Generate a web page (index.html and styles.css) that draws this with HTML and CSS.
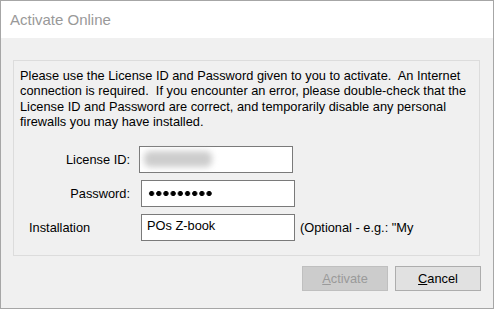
FILE: index.html
```html
<!DOCTYPE html>
<html lang="en">
<head>
    <meta charset="UTF-8">
    <title>Activate Online</title>
    <link rel="stylesheet" href="styles.css">
</head>
<body>
    <div class="dialog">
        <div class="titlebar">Activate Online</div>
        <div class="client">
            <div class="group">
                <p class="intro">Please use the License ID and Password given to you to activate.&nbsp; An Internet connection is required.&nbsp; If you encounter an error, please double-check that the License ID and Password are correct, and temporarily disable any personal firewalls you may have installed.</p>
                <div class="form">
                    <label class="lbl lbl_right">License ID:</label>
                    <div class="field field_shift"><span class="redact"></span></div>
                    <span></span>

                    <label class="lbl lbl_right">Password:</label>
                    <div class="field"><span class="dots"></span></div>
                    <span></span>

                    <label class="lbl">Installation</label>
                    <div class="field">POs Z-book</div>
                    <span class="hint">(Optional - e.g.: "My</span>
                </div>
            </div>
            <div class="buttons">
                <button class="btn" disabled><u>A</u>ctivate</button>
                <button class="btn"><u>C</u>ancel</button>
            </div>
        </div>
    </div>
</body>
</html>
```

FILE: styles.css
```css
body {
    margin: 0;
    font-family: "Liberation Sans", Arial, sans-serif;
    font-size: 12.8px;
    color: #000000;
}

.dialog {
    width: 494px;
    height: 309px;
    box-sizing: border-box;
    border: 1px solid #a6a6a6;
    background-color: #f0f0f0;
    display: flex;
    flex-direction: column;
}

.titlebar {
    height: 37px;
    box-sizing: border-box;
    padding: 10px 0 0 9px;
    background-color: #ffffff;
    color: #999999;
    font-size: 15px;
    line-height: 17px;
}

.client {
    flex: 1;
}

/* 分组框 */
.group {
    margin: 22px 13px 0 12px;
    padding: 7px 6px 14px 6px;
    border: 1px solid #dcdcdc;
}

.intro {
    margin: 0;
    line-height: 15.3px;
}

.form {
    margin: 17px 0 0 9px;
    display: grid;
    grid-template-columns: 107px 154px auto;
    grid-auto-rows: 27px;
    column-gap: 5px;
    row-gap: 7px;
    align-items: center;
}

.lbl_right {
    text-align: right;
    padding-right: 6px;
}

.field {
    position: relative;
    width: 154px;
    height: 27px;
    box-sizing: border-box;
    border: 1px solid #7a7a7a;
    background-color: #ffffff;
    padding: 3px 0 0 5px;
}

.field_shift {
    margin-left: -2px;
}

/* 打码的许可证号 */
.redact {
    position: absolute;
    left: 4px;
    top: 4px;
    width: 68px;
    height: 16px;
    border-radius: 6px;
    background-color: #cdcdcd;
    filter: blur(3px);
}

.dots {
    display: block;
    width: 65px;
    height: 7px;
    margin: 6px 0 0 1px;
    background: radial-gradient(circle, #000000 2.2px, transparent 2.9px) 0 0 / 7.2px 7px repeat-x;
}

.hint {
    white-space: nowrap;
}

.buttons {
    display: flex;
    justify-content: flex-end;
    gap: 7px;
    margin-top: 10px;
    padding-right: 12px;
}

.btn {
    width: 86px;
    height: 25px;
    padding: 0;
    border: 1px solid #adadad;
    background-color: #e1e1e1;
    font-family: inherit;
    font-size: 12.8px;
    color: #000000;
}

.btn:disabled {
    border-color: #bfbfbf;
    background-color: #cccccc;
    color: #9a9a9a;
}
```
